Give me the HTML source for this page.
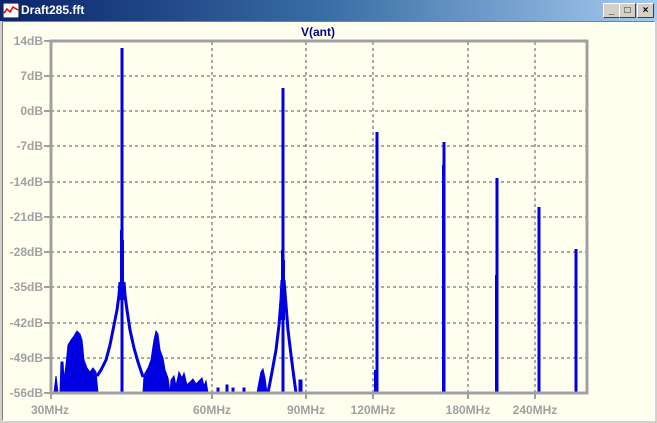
<!DOCTYPE html>
<html><head><meta charset="utf-8"><style>
html,body{margin:0;padding:0;width:657px;height:423px;overflow:hidden;background:#d4d0c8;font-family:"Liberation Sans",sans-serif}
.tb{position:absolute;left:0;top:0;width:657px;height:21px;background:linear-gradient(90deg,#0a246a,#3a6ea5 50%,#a6caf0);}
.tt{position:absolute;left:21px;top:3px;color:#fff;font-weight:bold;font-size:12px}
.btn{position:absolute;top:3px;width:15px;height:13px;background:#d4d0c8;border:1px solid;border-color:#fff #404040 #404040 #fff;font-size:10px;line-height:13px;text-align:center;font-weight:bold;color:#000}
.win{position:absolute;left:2px;top:21px;width:651px;height:398px;background:#fffff0;border:1px solid;border-color:#808080 #fff #fff #808080}
</style></head><body>
<div class="tb"><svg style="position:absolute;left:3px;top:3px" width="16" height="15"><rect x="0" y="0" width="16" height="15" fill="#fff" stroke="#000"/><polyline points="1,10 4,6 7,9 10,4 15,7" fill="none" stroke="#e00" stroke-width="1.5"/></svg><div class="tt">Draft285.fft</div>
<div class="btn" style="left:603px">_</div><div class="btn" style="left:619px">□</div><div class="btn" style="left:637px">×</div></div>
<div class="win"></div>
<svg style="position:absolute;left:0;top:0" width="657" height="423" font-family="Liberation Sans,sans-serif" font-size="12" font-weight="bold">
<text x="318" y="36" fill="#00008b" text-anchor="middle">V(ant)</text>
<g stroke="#555" stroke-dasharray="3,3" stroke-width="1">
<line x1="212" y1="42" x2="212" y2="393"/><line x1="306" y1="42" x2="306" y2="393"/><line x1="373" y1="42" x2="373" y2="393"/><line x1="468" y1="42" x2="468" y2="393"/><line x1="535" y1="42" x2="535" y2="393"/>
<line x1="51" y1="76" x2="587" y2="76"/><line x1="51" y1="111" x2="587" y2="111"/><line x1="51" y1="146" x2="587" y2="146"/><line x1="51" y1="182" x2="587" y2="182"/><line x1="51" y1="217" x2="587" y2="217"/><line x1="51" y1="252" x2="587" y2="252"/><line x1="51" y1="287" x2="587" y2="287"/><line x1="51" y1="323" x2="587" y2="323"/><line x1="51" y1="358" x2="587" y2="358"/>
</g>
<g fill="#0000e0" stroke="#0000e0" stroke-width="1">
<polygon points="54,393 56,376 58,393 60,393 61,362 63,362 64,380 66,365 68,345 71,340 74,336 77,331 80,334 82,340 84,360 87,368 90,372 93,368 96,372 98,393"/>
<polygon points="143,393 144,375 148,368 151,360 154,340 156,331 158,334 160,350 163,358 165,370 168,378 170,393"/>
<polygon points="170,393 171,380 174,376 176,386 179,372 182,378 184,373 187,385 190,382 193,379 196,384 199,381 202,378 204,386 206,381 208,393"/>
<polygon points="257,393 259,382 261,372 263,369 265,378 267,393"/>
<rect x="217" y="388" width="2" height="5"/><rect x="226" y="385" width="2" height="8"/><rect x="232" y="388" width="2" height="5"/><rect x="243" y="388" width="2" height="5"/><rect x="299" y="380" width="3" height="13"/>
</g>
<g fill="none" stroke="#0000e0" stroke-width="3" stroke-linejoin="round">
<polyline points="97,376 101,370 106,360 110,345 114,325 117,310 119,295 120,282"/>
<polyline points="124,282 125,295 127,310 130,330 134,348 138,362 143,377"/>
<polyline points="268,393 272,372 276,350 279,325 281,300 282,280"/>
<polyline points="284,280 286,305 288,330 291,355 294,378 296,393"/>
</g>
<g stroke="#0000e0" stroke-width="3">
<line x1="122" y1="393" x2="122" y2="48"/><line x1="283" y1="393" x2="283" y2="88"/>
<line x1="377" y1="393" x2="377" y2="132"/><line x1="444" y1="393" x2="444" y2="142"/><line x1="497" y1="393" x2="497" y2="178"/><line x1="539" y1="393" x2="539" y2="207"/><line x1="576" y1="393" x2="576" y2="249"/>
</g>
<g stroke="#0000e0" stroke-width="2"><line x1="121" y1="300" x2="121" y2="230"/><line x1="123" y1="300" x2="123" y2="240"/><line x1="282" y1="320" x2="282" y2="250"/><line x1="284" y1="320" x2="284" y2="260"/><line x1="375" y1="393" x2="375" y2="370"/><line x1="443" y1="393" x2="443" y2="165"/><line x1="496" y1="393" x2="496" y2="275"/></g>
<rect x="51" y="41" width="536" height="352" fill="none" stroke="#a0a0a0" stroke-width="3"/>
<g stroke="#a0a0a0" stroke-width="2">
<line x1="44" y1="41" x2="51" y2="41"/><line x1="44" y1="76" x2="51" y2="76"/><line x1="44" y1="111" x2="51" y2="111"/><line x1="44" y1="146" x2="51" y2="146"/><line x1="44" y1="182" x2="51" y2="182"/><line x1="44" y1="217" x2="51" y2="217"/><line x1="44" y1="252" x2="51" y2="252"/><line x1="44" y1="287" x2="51" y2="287"/><line x1="44" y1="323" x2="51" y2="323"/><line x1="44" y1="358" x2="51" y2="358"/><line x1="44" y1="393" x2="51" y2="393"/>
<line x1="51" y1="393" x2="51" y2="399"/><line x1="212" y1="393" x2="212" y2="399"/><line x1="306" y1="393" x2="306" y2="399"/><line x1="373" y1="393" x2="373" y2="399"/><line x1="468" y1="393" x2="468" y2="399"/><line x1="535" y1="393" x2="535" y2="399"/>
</g>
<g fill="#a0a0a0" text-anchor="end">
<text x="43" y="45">14dB</text><text x="43" y="80">7dB</text><text x="43" y="115">0dB</text><text x="43" y="150">-7dB</text><text x="43" y="186">-14dB</text><text x="43" y="221">-21dB</text><text x="43" y="256">-28dB</text><text x="43" y="291">-35dB</text><text x="43" y="327">-42dB</text><text x="43" y="362">-49dB</text><text x="43" y="397">-56dB</text>
</g>
<g fill="#a0a0a0" text-anchor="middle">
<text x="50" y="414">30MHz</text><text x="212" y="414">60MHz</text><text x="306" y="414">90MHz</text><text x="373" y="414">120MHz</text><text x="468" y="414">180MHz</text><text x="535" y="414">240MHz</text>
</g>
</svg>
</body></html>
